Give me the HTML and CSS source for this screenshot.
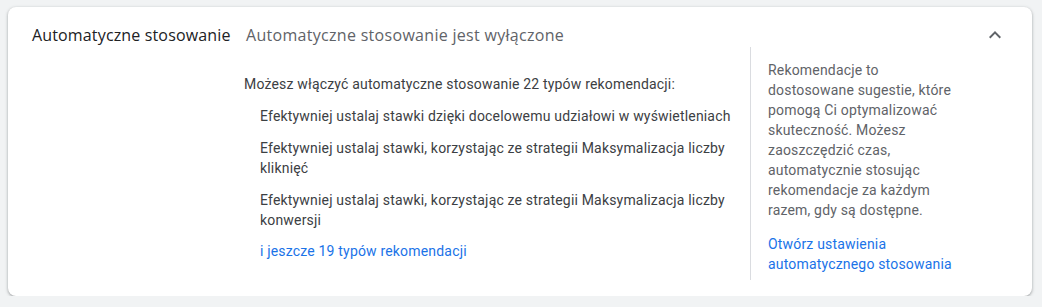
FILE: index.html
```html
<!DOCTYPE html>
<html lang="pl">
  <head>
    <meta charset="UTF-8" />
    <title>Automatyczne stosowanie</title>
    <link rel="stylesheet" href="styles.css">
  </head>
  <body>
    <div class="card">
      <div class="card-header">
        <div class="title">Automatyczne stosowanie</div>
        <div class="status">Automatyczne stosowanie jest wyłączone</div>
        <button class="toggle" aria-label="Zwiń">
          <svg width="24" height="24" viewBox="0 0 24 24">
            <path d="M12 8l-6 6 1.41 1.41L12 10.83l4.59 4.58L18 14z" fill="#5f6368" />
          </svg>
        </button>
      </div>

      <div class="card-body">
        <div class="main">
          <div class="intro">Możesz włączyć automatyczne stosowanie 22 typów rekomendacji:</div>
          <ul class="types">
            <li>Efektywniej ustalaj stawki dzięki docelowemu udziałowi w wyświetleniach</li>
            <li>Efektywniej ustalaj stawki, korzystając ze strategii Maksymalizacja liczby kliknięć</li>
            <li>Efektywniej ustalaj stawki, korzystając ze strategii Maksymalizacja liczby konwersji</li>
          </ul>
          <a class="link more" href="#">i jeszcze 19 typów rekomendacji</a>
        </div>

        <div class="aside">
          <p>Rekomendacje to dostosowane sugestie, które pomogą Ci optymalizować skuteczność. Możesz zaoszczędzić czas, automatycznie stosując rekomendacje za każdym razem, gdy są dostępne.</p>
          <a class="link" href="#">Otwórz ustawienia automatycznego stosowania</a>
        </div>
      </div>
    </div>
  </body>
</html>
```

FILE: styles.css
```css
body {
  margin: 0;
  padding: 7px 10px 0 8px;
  background-color: #f1f3f4;
  font-family: Roboto, "Liberation Sans", sans-serif;
  font-size: 14px;
  line-height: 20px;
  letter-spacing: 0.18px;
  color: #3c4043;
}
.card {
  background: #fff;
  border-radius: 8px;
  box-shadow: 0 1px 2px rgba(60, 64, 67, 0.3), 0 1px 3px 1px rgba(60, 64, 67, 0.15);
  padding: 0 25px 16px 24px;
}
.card-header {
  display: flex;
  align-items: center;
  height: 56px;
  margin-bottom: -16px;
  font-family: "Open Sans", sans-serif;
  font-size: 16px;
  letter-spacing: 0.15px;
}
.title {
  width: 214px;
  color: #202124;
  font-weight: 500;
}
.status {
  flex: 1;
  color: #5f6368;
  letter-spacing: 0.3px;
}
.toggle {
  border: none;
  background: none;
  padding: 0;
  width: 24px;
  height: 24px;
  cursor: pointer;
}
.card-body {
  display: flex;
  padding-left: 212px;
}
.main {
  flex: 1;
  padding-top: 27px;
  border-right: 1px solid #dadce0;
}
.types {
  list-style: none;
  margin: 0;
  padding: 0 0 0 16px;
}
.types li {
  margin-top: 12px;
  max-width: 478px;
}
.link {
  color: #1a73e8;
  text-decoration: none;
}
.more {
  display: block;
  margin: 11px 0 0 16px;
}
.aside {
  width: 196px;
  padding: 13px 43px 6px 17px;
  color: #5f6368;
}
.aside p {
  margin: 0 0 14px;
}
```
